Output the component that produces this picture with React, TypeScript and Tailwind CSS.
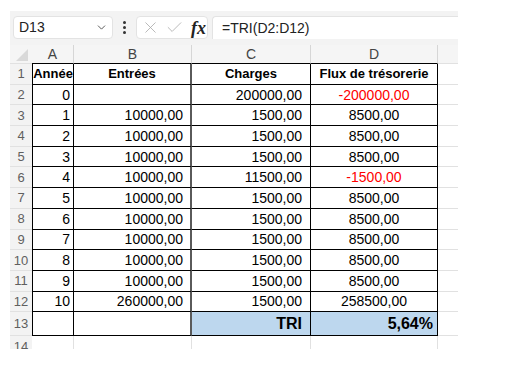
import { ChevronDown, X, Check } from "lucide-react";
import clsx from "clsx";

type Align = "left" | "right" | "center";

const cols = [
  { key: "A", w: "w-[42px]", pad: "pr-[3px]" },
  { key: "B", w: "w-[118px]", pad: "pr-[7px]" },
  { key: "C", w: "w-[119px]", pad: "pr-[8px]" },
  { key: "D", w: "w-[127px]", pad: "pr-[4px]" },
];

const rows: [string, string, string, string][] = [
  ["0", "", "200000,00", "-200000,00"],
  ["1", "10000,00", "1500,00", "8500,00"],
  ["2", "10000,00", "1500,00", "8500,00"],
  ["3", "10000,00", "1500,00", "8500,00"],
  ["4", "10000,00", "11500,00", "-1500,00"],
  ["5", "10000,00", "1500,00", "8500,00"],
  ["6", "10000,00", "1500,00", "8500,00"],
  ["7", "10000,00", "1500,00", "8500,00"],
  ["8", "10000,00", "1500,00", "8500,00"],
  ["9", "10000,00", "1500,00", "8500,00"],
  ["10", "260000,00", "1500,00", "258500,00"],
];

function RowHead({ n }: { n: number }) {
  return (
    <div className="w-[22px] shrink-0 bg-[#f3f3f3] border-b border-[#e1e1e1] flex items-center justify-center text-[13px] font-normal text-[#5f5f5f]">
      {n}
    </div>
  );
}

function Cell({
  col,
  children,
  align = "right",
  className,
}: {
  col: number;
  children?: React.ReactNode;
  align?: Align;
  className?: string;
}) {
  const c = cols[col];
  return (
    <div
      className={clsx(
        "shrink-0 flex items-center border-b border-b-black whitespace-nowrap overflow-hidden",
        c.w,
        col === 0 && "border-l border-l-black",
        col === 1 ? "border-r-2 border-r-[#5a5a5a]" : "border-r border-r-black",
        align === "right" && ["justify-end", c.pad],
        align === "center" && "justify-center",
        className,
      )}
    >
      {children}
    </div>
  );
}

function Spare() {
  return <div className="w-[20px] shrink-0 border-b border-[#e1e1e1]" />;
}

export default function App() {
  return (
    <div
      className="w-[511px] h-[384px] bg-white pt-[11px] pl-[10px] text-black overflow-hidden"
      style={{ fontFamily: '"Liberation Sans", Arial, sans-serif' }}
    >
      <div className="w-[448px]">
        {/* formula bar */}
        <div className="h-[34px] bg-[#f3f3f3] flex items-start pt-[5px]">
          <div className="ml-[3px] w-[100px] h-[23px] rounded-[4px] bg-white border border-[#e3e3e3] flex items-center justify-between pl-[5px] pr-[4px]">
            <span className="text-[14px] text-[#222]">D13</span>
            <ChevronDown size={13} strokeWidth={1.6} className="text-[#444]" />
          </div>
          <div className="w-[23px] h-[23px] flex flex-col items-center justify-center gap-[2px]">
            <span className="w-[3px] h-[3px] rounded-full bg-[#333]" />
            <span className="w-[3px] h-[3px] rounded-full bg-[#333]" />
            <span className="w-[3px] h-[3px] rounded-full bg-[#333]" />
          </div>
          <div className="w-[72px] h-[23px] rounded-[4px] bg-white border border-[#e3e3e3] flex items-center pl-[4px] gap-[5px]">
            <X size={19} strokeWidth={1} className="text-[#a8a8a8]" />
            <Check size={19} strokeWidth={1} className="text-[#a8a8a8]" />
            <span
              className="text-[18px] italic font-semibold text-[#222] leading-none ml-[2px]"
              style={{ fontFamily: '"Liberation Serif", "Times New Roman", serif' }}
            >
              fx
            </span>
          </div>
          <div className="ml-[4px] flex-1 h-[23px] bg-white border-t border-l border-[#e3e3e3] rounded-tl-[4px] flex items-center pl-[9px] text-[14px] text-[#222]">
            =TRI(D2:D12)
          </div>
        </div>

        {/* column headers */}
        <div className="flex h-[19px] bg-[#f5f5f5] text-[14px] leading-none text-[#444]">
          <div className="w-[22px] shrink-0 relative border-b border-[#e1e1e1]">
            <svg width="22" height="19" className="absolute inset-0">
              <polygon points="18,4 18,16 6,16" fill="#d9d9d9" />
            </svg>
          </div>
          {cols.map((c) => (
            <div
              key={c.key}
              className={clsx(
                "shrink-0 flex items-center justify-center border-r border-[#d6d6d6] border-b border-b-black",
                c.w,
              )}
            >
              {c.key}
            </div>
          ))}
          <div className="w-[20px] shrink-0 border-b border-[#e1e1e1]" />
        </div>

        {/* row 1 headings */}
        <div className="flex h-[20.7px] leading-none text-[13px] font-bold">
          <RowHead n={1} />
          <Cell col={0} align="center">Année</Cell>
          <Cell col={1} align="center">Entrées</Cell>
          <Cell col={2} align="center">Charges</Cell>
          <Cell col={3} align="center">Flux de trésorerie</Cell>
          <Spare />
        </div>

        {rows.map((r, i) => (
          <div key={i} className="flex h-[20.7px] leading-none text-[14px]">
            <RowHead n={i + 2} />
            <Cell col={0}>{r[0]}</Cell>
            <Cell col={1}>{r[1]}</Cell>
            <Cell col={2}>{r[2]}</Cell>
            <Cell col={3} align="center" className={clsx(r[3].startsWith("-") && "text-[#ff0000]")}>
              {r[3]}
            </Cell>
            <Spare />
          </div>
        ))}

        {/* row 13 result */}
        <div className="flex h-[24px] leading-none text-[16px] font-bold">
          <RowHead n={13} />
          <Cell col={0} />
          <Cell col={1} />
          <Cell col={2} className="bg-[#bdd7ee] pr-[4px]">TRI</Cell>
          <Cell col={3} className="bg-[#bdd7ee]">5,64%</Cell>
          <Spare />
        </div>

        {/* row 14, cut off by the crop */}
        <div className="flex h-[13px] overflow-hidden">
          <div className="w-[22px] shrink-0 bg-[#f3f3f3] text-[13px] text-[#5f5f5f] flex justify-center leading-none pt-[4px]">
            14
          </div>
          {cols.map((c) => (
            <div key={c.key} className={clsx("shrink-0 border-r border-[#e1e1e1]", c.w)} />
          ))}
        </div>
      </div>
    </div>
  );
}
